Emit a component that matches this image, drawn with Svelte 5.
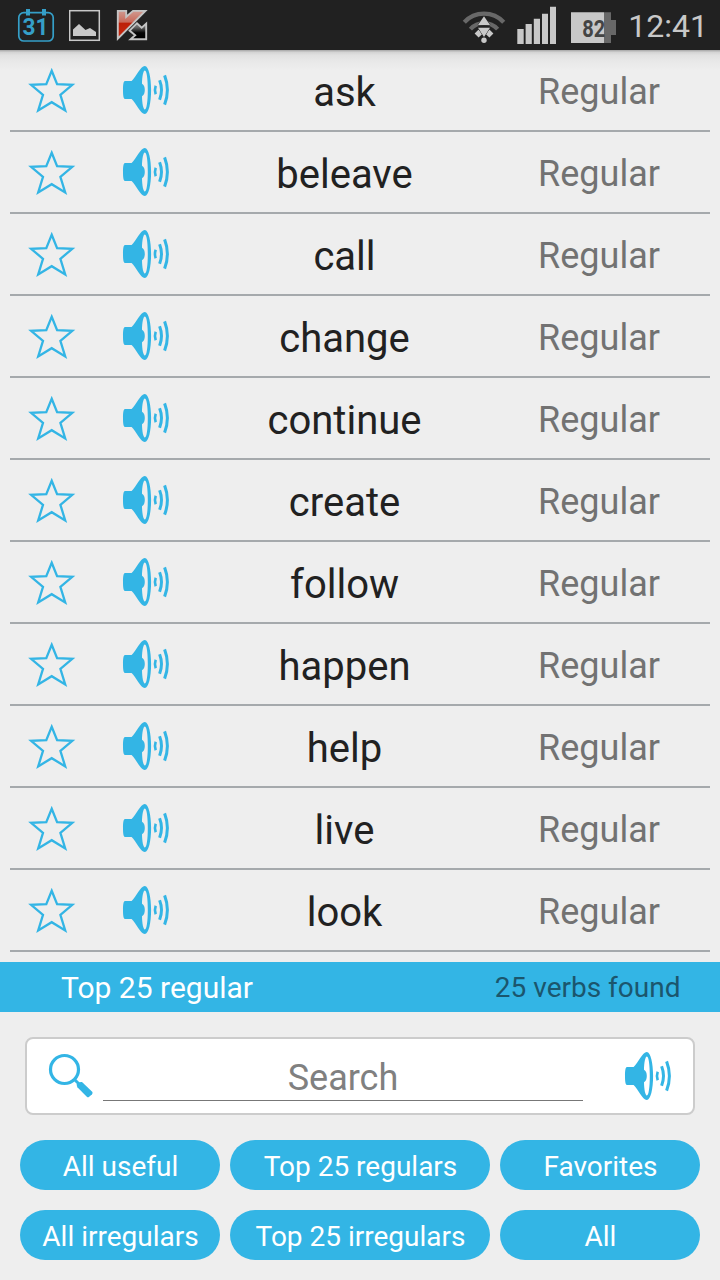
<script lang="ts">
	interface Verb {
		word: string
		type: string
	}

	const verbs: Verb[] = [
		'ask',
		'beleave',
		'call',
		'change',
		'continue',
		'create',
		'follow',
		'happen',
		'help',
		'live',
		'look'
	].map((word) => ({ word, type: 'Regular' }))

	const filters = [
		'All useful',
		'Top 25 regulars',
		'Favorites',
		'All irregulars',
		'Top 25 irregulars',
		'All'
	]

	let query = $state('')
	let starred: Record<string, boolean> = $state({})

	function toggleStar(word: string) {
		starred[word] = !starred[word]
	}
</script>

{#snippet speaker()}
	<svg class="speaker" width="48" height="50" viewBox="0 0 48 50">
		<path
			fill="currentColor"
			fill-rule="evenodd"
			d="M3 16H9.6C14 12 18.5 1 22.8 1C26.6 1 29.1 12 29.1 25S26.6 49 22.8 49C18.5 49 14 38 9.6 34H3C1.6 34 1 31 1 25S1.6 16 3 16ZM22.9 5.6C21.2 5.6 20.1 12 20 18.8C21.8 19.6 22.8 22 22.8 25S21.8 30.4 20 31.2C20.1 38 21.2 44.4 22.9 44.4C24.7 44.4 25.8 36 25.8 25S24.7 5.6 22.9 5.6Z"
		/>
		<g fill="none" stroke="currentColor">
			<path stroke-width="2.6" d="M33.7 20.8Q32.2 25 33.7 29.2" />
			<path stroke-width="3" d="M37.6 15.3Q41.4 25 37.6 34.7" />
			<path stroke-width="3" d="M42.6 10.4Q48.2 25 42.6 39.6" />
		</g>
	</svg>
{/snippet}

<div class="screen">
	<header class="status">
		<div class="status-group left">
			<svg width="38" height="50" viewBox="17 0 38 50">
				<rect x="18.8" y="12.6" width="34.4" height="28.4" rx="5" fill="none" stroke="#359fc8" stroke-width="1.7" />
				<path fill="#359fc8" d="M26 9h4v6.5h-4zM42 9h4v6.5h-4z" />
				<text class="calendar-day" x="35.6" y="34.8" text-anchor="middle" textLength="26" lengthAdjust="spacingAndGlyphs">31</text>
			</svg>
			<svg width="32" height="50" viewBox="69 0 32 50">
				<rect x="69.7" y="10.7" width="29.6" height="29.6" fill="none" stroke="#c8c8c8" stroke-width="1.5" />
				<path fill="#c8c8c8" d="M73 36V29.5L79 24L85.5 30L90 28L96 32V36Z" />
			</svg>
			<svg width="32" height="50" viewBox="116 0 32 50">
				<defs>
					<linearGradient id="kred" x1="0" y1="0" x2="0" y2="1">
						<stop offset="0" stop-color="#d09a90" />
						<stop offset="0.4" stop-color="#c8695a" />
						<stop offset="0.45" stop-color="#bd1f08" />
						<stop offset="1" stop-color="#c42a12" />
					</linearGradient>
					<linearGradient id="kdark" x1="0" y1="0" x2="0" y2="1">
						<stop offset="0" stop-color="#888" />
						<stop offset="0.25" stop-color="#666" />
						<stop offset="0.6" stop-color="#050505" />
						<stop offset="1" stop-color="#000" />
					</linearGradient>
				</defs>
				<path fill="url(#kdark)" stroke="#c4c4c4" stroke-width="1.9" d="M129.6 30.6L137 23.2L141.7 27.6L146.2 23.6V39.2H130.6L135.2 35.2Z" />
				<path fill="url(#kred)" stroke="#c4c4c4" stroke-width="1.9" d="M117.8 10.9H126.2V16.8L133 10.9H145.4L117.8 38.6Z" />
			</svg>
		</div>
		<div class="status-group right">
			<svg width="44" height="50" viewBox="462 0 44 50">
				<g fill="none" stroke="#686868" stroke-width="4.3">
					<path d="M464.3 22.2A27 27 0 0 1 503.7 22.2" />
					<path d="M470.4 29.1A18.5 18.5 0 0 1 497.6 29.1" />
				</g>
				<path fill="#c8c8c8" d="M474.6 33.4L478.6 29.6L482.8 33.6L478.6 37.4ZM493.4 33.4L489.4 29.6L485.2 33.6L489.4 37.4Z" />
				<path fill="#c8c8c8" stroke="#212121" stroke-width="1" paint-order="stroke" d="M484 16.2L490 25H478ZM478 27.8H490L484 37Z" />
				<circle cx="484" cy="40.3" r="2.7" fill="#c8c8c8" />
			</svg>
			<svg width="40" height="50" viewBox="517 0 40 50">
				<path fill="#c8c8c8" d="M517.3 29h6.4v15h-6.4zM525.6 24h6.2v20h-6.2zM533.8 18.7h6.2V44h-6.2zM542 13.8h6V44h-6zM550 6.8h6V44h-6z" />
			</svg>
			<svg width="46" height="50" viewBox="571 0 46 50">
				<path fill="#686868" d="M604 12.3h7v7.7h5v15h-5v8h-7z" />
				<path fill="#c8c8c8" d="M571 12.3h33V43h-33z" />
				<text class="battery-level" x="593.8" y="37" text-anchor="middle" textLength="23" lengthAdjust="spacingAndGlyphs">82</text>
			</svg>
			<span class="clock">12:41</span>
		</div>
	</header>

	<main class="list">
		{#each verbs as verb (verb.word)}
			<div class="row">
				<button class="icon" aria-label="Favorite" onclick={() => toggleStar(verb.word)}>
					<svg width="48" height="48" viewBox="28 66 48 48">
						<path
							fill={starred[verb.word] ? 'currentColor' : 'none'}
							stroke="currentColor"
							stroke-width="2.3"
							stroke-miterlimit="6"
							d="M51.7 70.8L57.1 84.1L72.3 84.8L60.4 94.8L65.2 110.4L51.7 102.2L38.2 110.4L43 94.8L31.1 84.8L46.3 84.1Z"
						/>
					</svg>
				</button>
				<button class="icon" aria-label="Listen">{@render speaker()}</button>
				<span class="word">{verb.word}</span>
				<span class="type">{verb.type}</span>
			</div>
		{/each}
	</main>

	<section class="summary">
		<span class="summary-title">Top 25 regular</span>
		<span class="summary-count">25 verbs found</span>
	</section>

	<section class="search">
		<svg class="lens" width="46" height="46" viewBox="48 1053 46 46">
			<circle cx="64.5" cy="1069.5" r="14" fill="none" stroke="currentColor" stroke-width="3.2" />
			<path stroke="currentColor" stroke-width="3" d="M74 1079L79 1084" />
			<path fill="currentColor" d="M77 1084.2Q79 1081.4 82 1082L92.2 1091.8Q93.2 1093 92 1094.2L89.2 1096.8Q88 1097.8 86.8 1096.8L77.4 1087.2Q76.4 1085.6 77 1084.2Z" />
		</svg>
		<input class="search-input" placeholder="Search" bind:value={query} />
		<button class="icon" aria-label="Listen">{@render speaker()}</button>
	</section>

	<nav class="filters">
		{#each filters as filter}
			<button class="filter">{filter}</button>
		{/each}
	</nav>
</div>

<style>
	:global(body) {
		background: #eee;
	}

	.screen {
		width: 720px;
		height: 1280px;
		overflow: hidden;
		display: flex;
		flex-direction: column;
		background: #eee;
		font-family: Roboto, 'Liberation Sans', sans-serif;
	}

	button {
		border: 0;
		padding: 0;
		font-family: inherit;
	}

	svg {
		display: block;
	}

	.status {
		flex: none;
		height: 50px;
		box-sizing: border-box;
		padding: 0 12px 0 17px;
		display: flex;
		justify-content: space-between;
		background: #212121;
	}

	.status-group {
		display: flex;
	}

	.left {
		gap: 14px;
	}

	.left svg:last-child {
		margin-left: 1px;
	}

	.right {
		gap: 11px;
	}

	.right svg:nth-child(3) {
		margin-left: 3px;
	}

	.calendar-day {
		font-size: 24px;
		font-weight: 700;
		fill: #359fc8;
	}

	.battery-level {
		font-size: 23px;
		font-weight: 700;
		fill: #444;
	}

	.clock {
		font-size: 32px;
		line-height: 52px;
		color: #c8c8c8;
	}

	.list {
		padding: 0 10px 10px;
		background: linear-gradient(#aaa 0, #b4b4b4 1px, #d2d2d2 2px, #e0e0e0 5px, #e8e8e8 11px, #eee 20px);
	}

	.row {
		height: 80px;
		display: grid;
		grid-template-columns: 84px 104px 293px 216px;
		align-items: center;
		border-bottom: 2px solid #a5a9ac;
	}

	.icon {
		display: flex;
		justify-content: center;
		background: none;
		color: #33b5e5;
	}

	.word {
		padding-top: 5px;
		text-align: center;
		font-size: 40px;
		line-height: 46px;
		color: #212121;
	}

	.type {
		padding-top: 4px;
		text-align: center;
		font-size: 36px;
		line-height: 42px;
		color: #727272;
	}

	.summary {
		flex: none;
		height: 50px;
		box-sizing: border-box;
		padding: 0 39.5px 0 61px;
		display: flex;
		align-items: center;
		justify-content: space-between;
		background: #33b5e5;
	}

	.summary-title {
		font-size: 30px;
		color: #fff;
	}

	.summary-count {
		font-size: 28px;
		color: #1b566d;
	}

	.search {
		height: 78px;
		box-sizing: border-box;
		margin: 25px 25px 0;
		padding: 0 21px;
		display: flex;
		align-items: center;
		border: 2px solid #ccc;
		border-radius: 8px;
		background: #fff;
	}

	.lens {
		flex: none;
		color: #33b5e5;
	}

	.search-input {
		width: 480px;
		height: 48px;
		box-sizing: border-box;
		margin: 2px 41px 0 9px;
		padding: 2px 0 0;
		border: 0;
		border-bottom: 1px solid #777;
		outline: 0;
		background: none;
		text-align: center;
		font-family: inherit;
		font-size: 36px;
		color: #212121;
	}

	.search-input::placeholder {
		color: #808080;
		opacity: 1;
	}

	.filters {
		padding: 25px 20px 20px;
		display: grid;
		grid-template-columns: 200px 260px 200px;
		gap: 20px 10px;
	}

	.filter {
		height: 50px;
		padding: 3px 0 0 1px;
		border-radius: 25px;
		background: #33b5e5;
		font-size: 28px;
		color: #fff;
	}
</style>
